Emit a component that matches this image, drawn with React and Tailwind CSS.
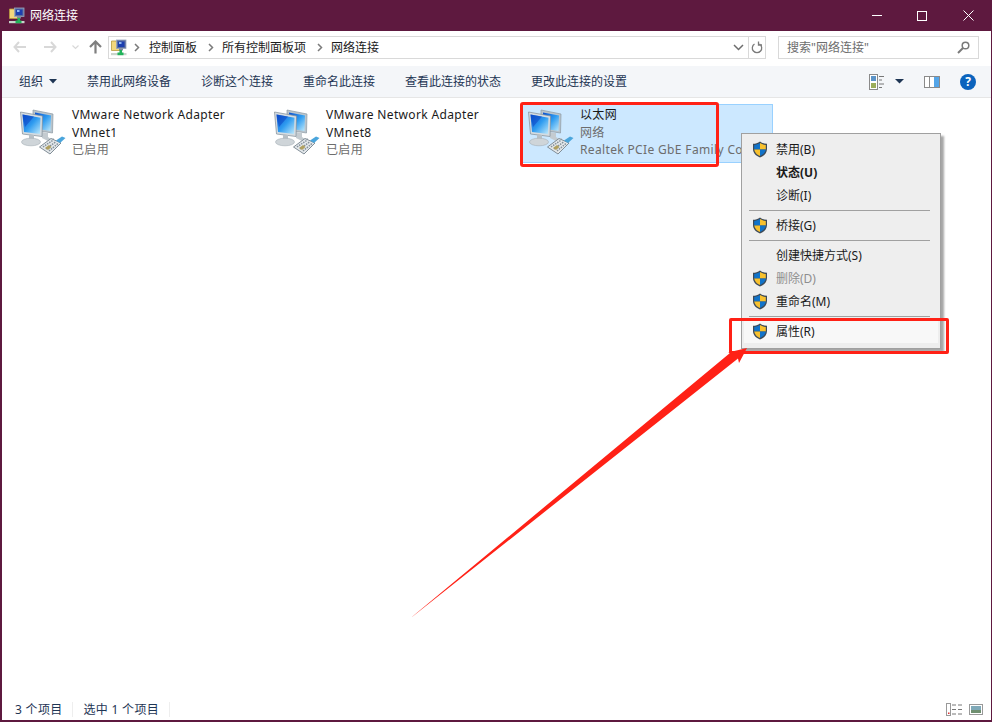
import React from 'react';

const NetworkIcon = () => (
  <svg width="48" height="52" viewBox="0 0 48 52" className="shrink-0">
    <defs>
      <linearGradient id="scr" x1="0" y1="0" x2="1" y2="1">
        <stop offset="0" stopColor="#0a4fd0" />
        <stop offset="0.5" stopColor="#2f9cf0" />
        <stop offset="1" stopColor="#bfe9fb" />
      </linearGradient>
    </defs>
    {/* back monitor */}
    <path d="M15 5 L35 9 L34.500 28 L15 25 Z" fill="#b9c4cc" stroke="#8d99a3" strokeWidth="0.7" />
    <path d="M17 7.500 L33 10.500 L32.500 26 L17 23.500 Z" fill="url(#scr)" />
    <path d="M24 27 L30 28 L30 32 L33 34 L36 33 L36 35.500 L30 36 L24 33 Z" fill="#c4cbd0" />
    {/* front monitor */}
    <path d="M2.500 7 L24.500 11 L24 31.500 L4.500 29 Z" fill="#d5dce1" stroke="#7f8c96" strokeWidth="0.7" />
    <path d="M4.500 9.500 L22.500 12.800 L22 29 L6 27 Z" fill="url(#scr)" />
    <path d="M4.500 9.500 L16 11.600 L7 22 Z" fill="#0b46c4" opacity="0.55" />
    <path d="M11 29.500 L16 30 L16 34 L11 34 Z" fill="#b8c0c6" />
    <ellipse cx="13" cy="37" rx="9.500" ry="3.800" fill="#cfd5d9" stroke="#a5aeb5" strokeWidth="0.6" />
    {/* plug */}
    <path d="M21.500 42 L33 33.500 L43 38 L32 49 Z" fill="#e4e8eb" stroke="#75828c" strokeWidth="0.9" />
    <path d="M25 42 L34.500 35.500 M28 44 L37.500 37 M31 46 L40 38.500" stroke="#86929c" strokeWidth="1.500" strokeDasharray="1.500 1" />
    <path d="M27 43 L31 40 L33.500 42 L30 45 Z" fill="#b0a060" />
    <path d="M38 35.500 L44 31.500 L47.500 33 L42 38 Z" fill="#4aa5dc" />
  </svg>
);

const FolderNetIcon = () => (
  <svg width="16" height="17" viewBox="0 0 16 17" className="shrink-0">
    <path d="M0.500 2 H5 L6 3.500 H9 V11.500 H0.500 Z" fill="#f3d77c" stroke="#b89a3e" strokeWidth="0.8" />
    <rect x="5.500" y="1" width="9.500" height="8.500" fill="#5c6f9f" stroke="#9aa6c0" strokeWidth="0.8" />
    <rect x="7" y="2.500" width="6.500" height="5.500" fill="#1c3fb0" />
    <rect x="8" y="3" width="2.500" height="2" fill="#8fb6f2" />
    <rect x="8" y="9.500" width="4" height="2" fill="#7d8899" />
    <rect x="8.500" y="11" width="2.500" height="3" fill="#21b35a" />
    <rect x="0" y="14" width="15.500" height="2.200" fill="#c9d4cc" />
    <rect x="6.500" y="13.500" width="6" height="2.700" fill="#21b35a" />
  </svg>
);

const Shield = () => (
  <svg width="16" height="17" viewBox="0 0 16 17" className="shrink-0">
    <path d="M8 0.500 C10 2 12.500 2.800 15 2.800 V8 C15 12 12 15 8 16.500 C4 15 1 12 1 8 V2.800 C3.500 2.800 6 2 8 0.500 Z" fill="#3e4a57" />
    <path d="M8 2 C6 3.200 4.200 3.800 2.200 4 V8.500 H8 Z" fill="#1173c9" />
    <path d="M8 2 C10 3.200 11.800 3.800 13.800 4 V8.500 H8 Z" fill="#f8c12e" />
    <path d="M2.200 8.500 H8 V15 C5 13.800 2.600 11.500 2.200 8.500 Z" fill="#f8c12e" />
    <path d="M13.800 8.500 H8 V15 C11 13.800 13.400 11.500 13.800 8.500 Z" fill="#1173c9" />
  </svg>
);

const Crumb = () => (
  <svg width="6" height="9" viewBox="0 0 6 9" className="shrink-0">
    <path d="M1 1 L4.500 4.500 L1 8" fill="none" stroke="#7b7b7b" strokeWidth="1.500" />
  </svg>
);

const toolbarItems = [
  ['禁用此网络设备', 'w-[114px]'],
  ['诊断这个连接', 'w-[102px]'],
  ['重命名此连接', 'w-[102px]'],
  ['查看此连接的状态', 'w-[126px]'],
  ['更改此连接的设置', 'w-[110px]'],
];

const adapters = [
  { name: 'VMware Network Adapter', sub: 'VMnet1', state: '已启用' },
  { name: 'VMware Network Adapter', sub: 'VMnet8', state: '已启用' },
  { name: '以太网', sub: '网络', state: 'Realtek PCIe GbE Family Controller', selected: true },
];

const MenuItem = ({ label, shield, bold, disabled, hot }) => (
  <div className={`h-[23px] mx-[2px] flex items-center ${hot ? 'bg-[#f8f8f8]' : ''}`}>
    <span className="w-[32px] pl-[8px] flex items-center">{shield && <Shield />}</span>
    <span className={`${bold ? 'font-bold' : ''} ${disabled ? 'text-[#8e8e8e]' : 'text-[#1a1a1a]'}`}>{label}</span>
  </div>
);

const MenuSep = () => <div className="h-px bg-[#a0a0a0] ml-[7px] mr-[10px] my-[3px]" />;

export default function App() {
  return (
    <div className="relative w-[992px] h-[722px] overflow-hidden bg-white flex flex-col border-l-2 border-r border-b-2 border-[#5e193f] text-[12px] leading-[17px] text-[#1a1a1a] font-['Noto_Sans','Noto_Sans_CJK_SC',sans-serif]">
      {/* title bar */}
      <div className="h-[31px] shrink-0 bg-[#5e193f] flex items-center pl-[7px] text-white">
        <FolderNetIcon />
        <span className="ml-[5px] -mt-px">网络连接</span>
        <div className="ml-auto flex items-center h-full pr-[1px]">
          <div className="w-[45px] flex justify-center">
            <div className="w-[10px] h-px bg-white" />
          </div>
          <div className="w-[46px] flex justify-center">
            <div className="w-[10px] h-[10px] border border-white" />
          </div>
          <div className="w-[45px] flex justify-center pl-[1px]">
            <svg width="11" height="11" viewBox="0 0 11 11">
              <path d="M0.500 0.500 L10.500 10.500 M10.500 0.500 L0.500 10.500" stroke="#fff" strokeWidth="1" />
            </svg>
          </div>
        </div>
      </div>

      {/* address bar */}
      <div className="h-[35px] shrink-0 flex items-center pl-[11px] pb-[3px]">
        <svg width="14" height="12" viewBox="0 0 14 12" className="shrink-0">
          <path d="M6 1 L1.500 6 L6 11 M2 6 H13" fill="none" stroke="#d8d8d8" strokeWidth="2" />
        </svg>
        <svg width="14" height="12" viewBox="0 0 14 12" className="ml-[16px] shrink-0">
          <path d="M8 1 L12.500 6 L8 11 M12 6 H1" fill="none" stroke="#d8d8d8" strokeWidth="2" />
        </svg>
        <svg width="7" height="5" viewBox="0 0 7 5" className="ml-[15px] shrink-0">
          <path d="M0.500 0.500 L3.500 3.500 L6.500 0.500" fill="none" stroke="#d8d8d8" strokeWidth="1.200" />
        </svg>
        <svg width="13" height="14" viewBox="0 0 13 14" className="ml-[10px] shrink-0">
          <path d="M6.500 13.500 V2 M1 7 L6.500 1.500 L12 7" fill="none" stroke="#7f7f7f" strokeWidth="2.200" />
        </svg>
        <div className="ml-[6px] w-[658px] h-[23px] flex items-center border border-[#d9d9d9] pl-[2px]">
          <FolderNetIcon />
          <span className="ml-[7px]"><Crumb /></span>
          <span className="ml-[9px]">控制面板</span>
          <span className="ml-[11px]"><Crumb /></span>
          <span className="ml-[8px]">所有控制面板项</span>
          <span className="ml-[11px]"><Crumb /></span>
          <span className="ml-[8px]">网络连接</span>
          <svg width="11" height="7" viewBox="0 0 11 7" className="ml-auto mr-[2px]">
            <path d="M1 1 L5.500 5.500 L10 1" fill="none" stroke="#6d6d6d" strokeWidth="1.500" />
          </svg>
          <div className="w-[17px] h-full border-l border-[#d9d9d9] ml-[2px] flex items-center justify-center">
            <svg width="12" height="13" viewBox="0 0 12 13">
              <path d="M8.500 3 A4.700 4.700 0 1 1 3.500 3 M7.500 0.500 V4 H11" fill="none" stroke="#7a7a7a" strokeWidth="1.300" />
            </svg>
          </div>
        </div>
        <div className="ml-[12px] w-[201px] h-[23px] flex items-center border border-[#d9d9d9] pl-[8px] pr-[8px] text-[#6d6d6d]">
          <span>搜索"网络连接"</span>
          <svg width="13" height="13" viewBox="0 0 13 13" className="ml-auto">
            <circle cx="8.500" cy="4.500" r="3.300" fill="none" stroke="#7a7a7a" strokeWidth="1.500" />
            <path d="M6 7 L1 12" stroke="#7a7a7a" strokeWidth="2" />
          </svg>
        </div>
      </div>

      {/* command bar */}
      <div className="h-[32px] shrink-0 bg-[#f4f6f9] border-b border-[#e6e6e6] flex items-center pl-[17px] text-[#1e3554]">
        <span>组织</span>
        <svg width="8" height="5" viewBox="0 0 8 5" className="ml-[6px] mr-[30px]">
          <path d="M0 0 H8 L4 4.500 Z" fill="#1e3554" />
        </svg>
        {toolbarItems.map(([label, width]) => (
          <span key={label} className={`${width} shrink-0`}>{label}</span>
        ))}
        {/* view, pane and help buttons */}
        <svg width="15" height="16" viewBox="0 0 15 16" className="ml-[228px] shrink-0">
          <rect x="0.500" y="0.500" width="8" height="15" fill="#fff" stroke="#8a8a8a" />
          <rect x="2" y="2" width="5" height="5" fill="#5c94c8" />
          <rect x="2" y="9" width="5" height="5" fill="#9bad5a" />
          <path d="M10 2.500 H15 M10 6 H13 M10 10 H15 M10 13.500 H13" stroke="#777" />
        </svg>
        <svg width="9" height="5" viewBox="0 0 9 5" className="ml-[11px]">
          <path d="M0 0 H9 L4.500 4.500 Z" fill="#1e3554" />
        </svg>
        <svg width="16" height="12" viewBox="0 0 16 12" className="ml-[20px]">
          <rect x="0.500" y="0.500" width="15" height="11" fill="#fff" stroke="#8a8a8a" />
          <rect x="10" y="1" width="5" height="10" fill="#54a5e8" />
          <path d="M5.500 1 V11" stroke="#8a8a8a" />
        </svg>
        <div className="ml-[20px] w-[16px] h-[16px] rounded-full bg-[#0b63bd] text-white font-bold text-[12px] leading-[16px] text-center">?</div>
      </div>

      {/* adapter list */}
      <div className="flex-1 flex gap-[2px] pl-[11px] pt-[6px] items-start">
        {adapters.map((a, i) => (
          <div
            key={i}
            className={`w-[252px] h-[59px] shrink-0 flex pl-[4px] border ${a.selected ? 'bg-[#cce8ff] border-[#99d1ff]' : 'border-transparent'}`}
          >
            <NetworkIcon />
            <div className="ml-[6px] pt-[1px] whitespace-nowrap leading-[17.500px] tracking-[0.35px]">
              <div>{a.name}</div>
              <div className={a.selected ? 'text-[#6d6d6d]' : ''}>{a.sub}</div>
              <div className="text-[#6d6d6d]">{a.state}</div>
            </div>
          </div>
        ))}
      </div>

      {/* status bar */}
      <div className="h-[21px] shrink-0 flex items-center pl-[13px] text-[#1e3554] tracking-[0.3px]">
        <span>3 个项目</span>
        <div className="w-px h-[15px] bg-[#eeeeee] ml-[10px] mr-[10px]" />
        <span>选中 1 个项目</span>
        <div className="w-px h-[15px] bg-[#eeeeee] ml-[10px]" />
        <svg width="16" height="13" viewBox="0 0 16 13" className="ml-auto">
          <rect x="0.500" y="0.500" width="4" height="12" fill="#fff" stroke="#999" />
          <path d="M6 2 H10 M12 2 H16 M6 6.500 H10 M12 6.500 H16 M6 11 H10 M12 11 H16" stroke="#777" />
          <rect x="2" y="9.500" width="1.500" height="1.500" fill="#d33" />
        </svg>
        <svg width="14" height="11" viewBox="0 0 14 11" className="ml-[7px] mr-[8px]">
          <rect x="0.500" y="0.500" width="13" height="10" fill="#fff" stroke="#999" />
          <rect x="2" y="2" width="10" height="7" fill="#7fa9b8" />
          <rect x="2" y="6" width="10" height="3" fill="#6f8f70" />
        </svg>
      </div>

      {/* context menu */}
      <div className="absolute left-[739px] top-[133px] w-[200px] h-[216px] pt-[4px] bg-[#eeeeee] border border-[#a0a0a0] shadow-[3px_3px_2px_rgba(0,0,0,0.35)] whitespace-nowrap">
        <MenuItem label="禁用(B)" shield />
        <MenuItem label="状态(U)" bold />
        <MenuItem label="诊断(I)" />
        <MenuSep />
        <MenuItem label="桥接(G)" shield />
        <MenuSep />
        <MenuItem label="创建快捷方式(S)" />
        <MenuItem label="删除(D)" shield disabled />
        <MenuItem label="重命名(M)" shield />
        <MenuSep />
        <MenuItem label="属性(R)" shield hot />
      </div>

      {/* red annotations */}
      <div className="absolute left-[518px] top-[102px] w-[199px] h-[65px] border-[3px] border-[#ff2116] rounded-[3px]" />
      <div className="absolute left-[727px] top-[318px] w-[220px] h-[36px] border-[3px] border-[#ff2116] rounded-[2px]" />
      <svg width="992" height="722" viewBox="0 0 992 722" className="absolute -left-[2px] top-0 pointer-events-none">
        <path d="M412 617 L413 616 L730 353 L728 352.500 L747 348 L739 363 L738 358.500 Z" fill="#ff2116" />
      </svg>
    </div>
  );
}
